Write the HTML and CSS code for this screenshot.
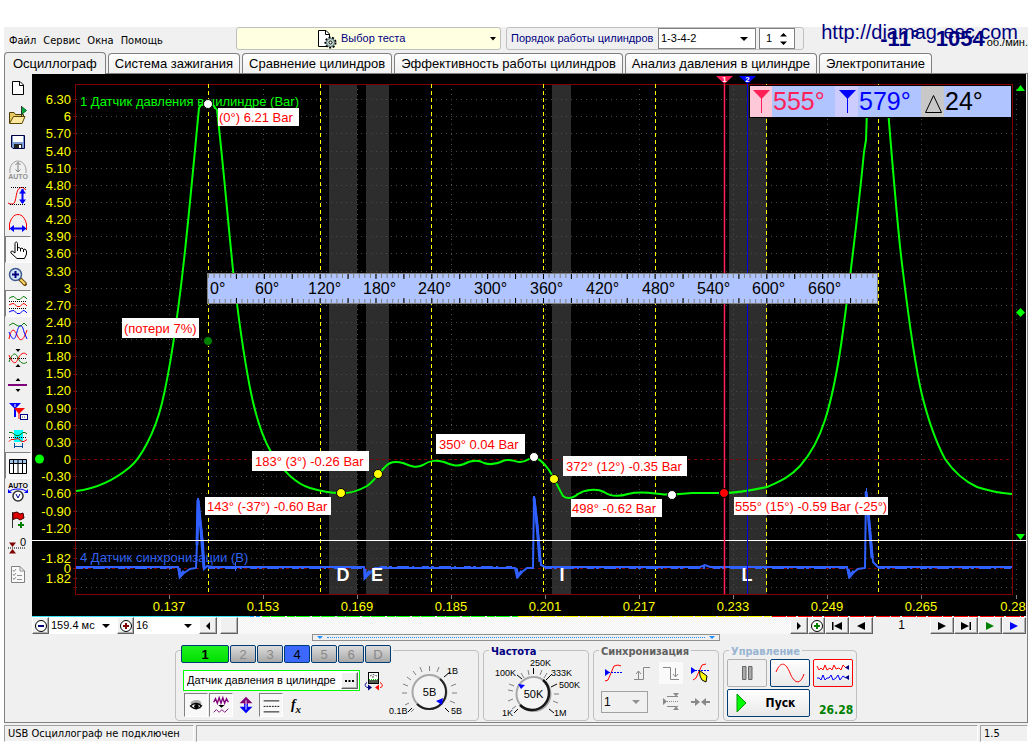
FILE: index.html
```html
<!DOCTYPE html>
<html lang="ru">
<head>
<meta charset="utf-8">
<meta name="viewport" content="width=device-width, initial-scale=1">
<title>Осциллограф</title>
<link rel="stylesheet" href="styles.css">
</head>
<body>
<div class="app">
  <header class="topbar">
    <nav class="menu">
      <button type="button">Файл</button>
      <button type="button">Сервис</button>
      <button type="button">Окна</button>
      <button type="button">Помощь</button>
    </nav>
    <button type="button" class="test-picker">
      <svg class="test-icon" width="20" height="20" viewBox="0 0 20 20">
        <path d="M1.500 1.500H9L12.500 5V17.500H1.500Z" fill="#fff" stroke="#000"/>
        <path d="M8.500 1.500V5.500H12.500" fill="none" stroke="#000"/>
        <circle cx="13.500" cy="13.500" r="5" fill="#c4dccb" stroke="#000" stroke-width="2" stroke-dasharray="2 1.500"/>
        <circle cx="13.500" cy="13.500" r="4" fill="#c4dccb" stroke="#567"/>
        <circle cx="13.500" cy="13.500" r="1.500" fill="#fff" stroke="#000"/>
      </svg>
      <span>Выбор теста</span>
      <svg class="test-arrow" width="6" height="4" viewBox="0 0 6 4"><path d="M0 0H6L3 3.500Z"/></svg>
    </button>
    <div class="firing">
      <label for="order">Порядок работы цилиндров</label>
      <span class="combo combo-order"><select id="order"><option>1-3-4-2</option></select></span>
      <span class="spin">
        <input id="cyl" type="text" value="1" aria-label="Цилиндр">
        <svg width="9" height="14" viewBox="0 0 9 14"><path d="M1 4.500H8L4.500 1ZM1 9.500H8L4.500 13Z"/></svg>
      </span>
    </div>
    <div class="rpm"><b class="angle">-11°</b><b>1054</b><span>об./мин.</span></div>
    <a class="site" href="#">http://diamag-esc.com</a>
  </header>

  <nav class="tabs">
    <button type="button" class="tab tab-on">Осциллограф</button>
    <button type="button" class="tab">Система зажигания</button>
    <button type="button" class="tab">Сравнение цилиндров</button>
    <button type="button" class="tab">Эффективность работы цилиндров</button>
    <button type="button" class="tab">Анализ давления в цилиндре</button>
    <button type="button" class="tab">Электропитание</button>
  </nav>

  <main class="work">
    <div class="scope">
      <aside class="tools">
        <button type="button" aria-label="Новый"><svg viewBox="0 0 26 26"><path d="M7.500 6.500H15L18.500 10V19.500H7.500Z" fill="#fff" stroke="#000"/><path d="M14.500 6.500V10.500H18.500" fill="none" stroke="#000"/></svg></button>
        <button type="button" aria-label="Открыть"><svg viewBox="0 0 26 26"><path d="M4.500 21V10.500H9L10.500 12.500H18.500V14" fill="#e8c860" stroke="#4c3c00"/><path d="M4.500 21.500L8.500 14.500H20L17 21.500Z" fill="#ffe9a0" stroke="#5a4600"/><path d="M16.500 4.500L21.500 8.500L16.500 12.500Z" fill="#0a3" stroke="#063"/><path d="M16.500 4V15" stroke="#333"/></svg></button>
        <button type="button" aria-label="Сохранить"><svg viewBox="0 0 26 26"><path d="M6.500 6.500H19.500V19.500H8L6.500 18Z" fill="#7c9cd8" stroke="#000040"/><path d="M8 7H18V13H8Z" fill="#fff"/><path d="M9 15H17V19H9Z" fill="#222"/><path d="M14 16H16V19H14Z" fill="#fff"/></svg></button>
        <button type="button" aria-label="Авто" disabled><svg viewBox="0 0 26 26"><path d="M5 17C4 9 9 5 13 5S22 9 21 17" fill="none" stroke="#a0a0a0"/><path d="M13 6V16M10.500 9L13 6.500L15.500 9M10.500 13.500L13 16L15.500 13.500" fill="none" stroke="#808080"/><text x="13" y="23" class="icon-text" fill="#909090">AUTO</text></svg></button>
        <button type="button" aria-label="Размах"><svg viewBox="0 0 26 26"><path d="M3 20L5 21H8C12 20 10 5 16 4.500H18L21 7" fill="none" stroke="#f00"/><path d="M6 4.500H22M5 21.500H20" stroke="#000" stroke-dasharray="1 1"/><path d="M17.500 6V20" stroke="#00f" stroke-width="2"/><path d="M14 10.500L17.500 6L21 10.500ZM14 16.500L17.500 21L21 16.500Z" fill="#00f"/></svg></button>
        <button type="button" aria-label="Период"><svg viewBox="0 0 26 26"><path d="M4.500 20V14C6 8 9 4.500 13 4.500S20 8 21.500 14V20" fill="none" stroke="#f00"/><path d="M6 18.500H20" stroke="#00f" stroke-width="2"/><path d="M9 15L4.500 18.500L9 22ZM17 15L21.500 18.500L17 22Z" fill="#00f"/></svg></button>
        <button type="button" class="on" aria-label="Рука"><svg viewBox="0 0 26 26"><path d="M10 16V6.500C10 4.500 12.500 4.500 12.500 6.500V11L14 10.500L15.500 11.500L17 11L18.500 12.500L20 12L21.500 14V17L19.500 21.500H12L6 16C5 14.500 7 13.500 8 14.500Z" fill="#fff" stroke="#000"/><path d="M12.500 11V14M15.500 11.500V14.500M18.500 12.500V15" stroke="#000"/></svg></button>
        <button type="button" aria-label="Масштаб"><svg viewBox="0 0 26 26"><path d="M15 15L20 20" stroke="#6b4b10" stroke-width="4" stroke-linecap="round"/><path d="M15.500 15.500L20 20" stroke="#ffd968" stroke-width="2"/><circle cx="10.500" cy="10.500" r="6" fill="#cfe4fa" stroke="#3c588c" stroke-width="1.500"/><path d="M7 10.500H14M10.500 7V14" stroke="#00007c" stroke-width="2"/></svg></button>
        <button type="button" class="on" aria-label="Раздельно"><svg viewBox="0 0 26 26"><g fill="none"><path d="M4 7.500L6 6L9 5.500L12 8.500H15L18 5.500L20 6L22 8" stroke="#0a7a0a"/><path d="M4 14L6 13L9 12.500L12 15.500H15L18 12.500L20 13L22 15" stroke="#f00"/><path d="M4 21L6 20L9 19.500L12 22.500H15L18 19.500L20 20L22 22" stroke="#00f"/><path d="M4 10.500H22M4 17.500H22" stroke="#000" stroke-dasharray="1 1"/></g></svg></button>
        <button type="button" aria-label="Вместе"><svg viewBox="0 0 26 26"><g fill="none"><path d="M4 7.500L8 5L13 8H16L19 5L22 8" stroke="#0a7a0a"/><path d="M4 21C6 10 9 10 12 17S18 24 22 12" stroke="#f00"/><path d="M4 14C8 24 10 22 12 14S17 5 19 14L22 21" stroke="#00f"/></g></svg></button>
        <button type="button" aria-label="Наложение"><svg viewBox="0 0 26 26"><path d="M4 13.500H22" stroke="#000" stroke-dasharray="1 1"/><path d="M4 17C8 6 11 8 13 13S19 20 22 17" fill="none" stroke="#0a7a0a"/><path d="M4 10C8 20 11 19 13 14S19 6 22 10" fill="none" stroke="#f00"/><path d="M10.500 4H15.500L13 7ZM10.500 22H15.500L13 19Z"/></svg></button>
        <button type="button" aria-label="Сдвиг"><svg viewBox="0 0 26 26"><path d="M3 13H22" stroke="#80007c" stroke-width="2"/><path d="M10.500 9H15.500L13 6ZM10.500 17H15.500L13 20Z"/></svg></button>
        <button type="button" aria-label="Маркеры"><svg viewBox="0 0 26 26"><path d="M4 4H16L10 10Z M9 6H11V18H9Z" fill="#00f"/><path d="M9 9H20L14 15Z" fill="#f00"/><path d="M14 13V20" stroke="#f00"/><path d="M10 5V8" stroke="#fff"/><rect x="15.500" y="15.500" width="7" height="5" fill="#fff" stroke="#000080"/><path d="M17 18H21" stroke="#555" stroke-dasharray="1 1"/></svg></button>
        <button type="button" aria-label="Область"><svg viewBox="0 0 26 26"><path d="M9 4H18V16H9Z" fill="#0ff"/><path d="M4 6.500H7L11 9.500H14L18 6.500H20L22 8" fill="none" stroke="#0a7a0a"/><path d="M4 15.500L6 13.500H9L13 12.500L17 15.500H19L22 13.500" fill="none" stroke="#f00"/><path d="M4 11.500H22" stroke="#000" stroke-dasharray="1 1"/><path d="M9.500 17V22M17.500 17V22M10 20.500H17" stroke="#004c9c"/></svg></button>
        <button type="button" class="on" aria-label="Таблица"><svg viewBox="0 0 26 26"><path d="M4.500 6.500H21.500V20.500H4.500Z" fill="#fff" stroke="#000"/><path d="M5 7H21V10H5Z" fill="#9cc4ec"/><path d="M4 10.500H22M8.500 7V20M13 7V20M17.500 7V20" stroke="#000"/></svg></button>
        <button type="button" aria-label="Авто развертка"><svg viewBox="0 0 26 26"><text x="13" y="8" class="icon-text" fill="#000">AUTO</text><path d="M4 12C7 8 19 8 22 12" fill="none" stroke="#00f"/><path d="M3 9V13H7ZM23 9V13H19Z" fill="#00f"/><circle cx="13" cy="16" r="5" fill="#fff" stroke="#333" stroke-width="1.500"/><path d="M11 14L13 18L15 14" fill="none" stroke="#008"/></svg></button>
        <button type="button" aria-label="Флаг"><svg viewBox="0 0 26 26"><path d="M7.500 5V21" stroke="#333"/><path d="M8 6L12 5L15 7L18 6L19 11L15 13L12 11L8 12.500Z" fill="#e00000" stroke="#400"/><path d="M13 18H19M16 15V21" stroke="#008000" stroke-width="2"/></svg></button>
        <button type="button" aria-label="Ноль"><svg viewBox="0 0 26 26"><path d="M4 8.500H11L7.500 13ZM4 19.500H11L7.500 15Z" fill="#800000"/><path d="M3 14H21" stroke="#000" stroke-dasharray="1 1"/><text x="15" y="12" class="zero-text">0</text></svg></button>
        <button type="button" aria-label="Отчет"><svg viewBox="0 0 26 26"><path d="M6.500 5.500H15L19.500 10V21.500H6.500Z" fill="#fafafa" stroke="#808080"/><path d="M15 5.500V10H19.500M8 9L9 10.500L11 8M8 13L9 14.500L11 12M8 17L9 18.500L11 16M12 14.500H17M12 18.500H17" fill="none" stroke="#909090"/></svg></button>
      </aside>

      <div class="view">
        <svg class="chart" viewBox="32 74 994 543" role="img" aria-label="Осциллограмма давления в цилиндре">
          <rect x="32" y="74" width="994" height="542" fill="#000"/>
          <path fill="#2d2d2d" d="M329 85H357V594H329ZM366 85H389V594H366ZM552 85H571V594H552ZM729 85H767V594H729Z"/>
          <path class="grid" d="M76 99.500H1012M76 116.500H1012M76 133.500H1012M76 151.500H1012M76 168.500H1012M76 185.500H1012M76 202.500H1012M76 219.500H1012M76 236.500H1012M76 253.500H1012M76 271.500H1012M76 288.500H1012M76 305.500H1012M76 322.500H1012M76 339.500H1012M76 356.500H1012M76 374.500H1012M76 391.500H1012M76 408.500H1012M76 425.500H1012M76 442.500H1012M76 476.500H1012M76 493.500H1012M76 511.500H1012M76 528.500H1012M76 548.500H1012M76 558.500H1012M76 578.500H1012M76 587.500H1012"/>
          <path class="grid" d="M169.500 89V594M263.500 89V594M357.500 89V594M451.500 89V594M545.500 89V594M639.500 89V594M733.500 89V594M827.500 89V594M921.500 89V594M1016.500 89V594"/>
          <path d="M169.500 595V599M263.500 595V599M357.500 595V599M451.500 595V599M545.500 595V599M639.500 595V599M733.500 595V599M827.500 595V599M921.500 595V599M1016.500 595V599" stroke="#808080"/>
          <path d="M75 99.500H73M75 116.500H73M75 133.500H73M75 151.500H73M75 168.500H73M75 185.500H73M75 202.500H73M75 219.500H73M75 236.500H73M75 253.500H73M75 271.500H73M75 288.500H73M75 305.500H73M75 322.500H73M75 339.500H73M75 356.500H73M75 374.500H73M75 391.500H73M75 408.500H73M75 425.500H73M75 442.500H73M75 459.500H73M75 476.500H73M75 493.500H73M75 511.500H73M75 528.500H73M75 548.500H73M75 558.500H73M75 568.500H73M75 578.500H73M75 587.500H73" stroke="#800000"/>
          <path d="M76 459.500H1012M76 568.500H1012" stroke="#800000" stroke-dasharray="3 3"/>
          <rect x="75.500" y="84.500" width="937" height="510" fill="none" stroke="#800000"/>
          <path d="M208.500 84V594M320.500 84V594M431.500 84V594M543.500 84V594M655.500 84V594M766.500 84V594M878.500 84V594" stroke="#ff0" stroke-dasharray="4 3"/>

          <g class="axis axis-y">
            <text x="71" y="104">6.30</text><text x="71" y="121">6</text><text x="71" y="138">5.70</text><text x="71" y="156">5.40</text><text x="71" y="173">5.10</text><text x="71" y="190">4.80</text><text x="71" y="207">4.50</text><text x="71" y="224">4.20</text><text x="71" y="241">3.90</text><text x="71" y="258">3.60</text><text x="71" y="276">3.30</text><text x="71" y="293">3</text><text x="71" y="310">2.70</text><text x="71" y="327">2.40</text><text x="71" y="344">2.10</text><text x="71" y="361">1.80</text><text x="71" y="378">1.50</text><text x="71" y="395">1.20</text><text x="71" y="413">0.90</text><text x="71" y="430">0.60</text><text x="71" y="447">0.30</text><text x="71" y="464">0</text><text x="71" y="481">-0.30</text><text x="71" y="498">-0.60</text><text x="71" y="516">-0.90</text><text x="71" y="533">-1.20</text><text x="71" y="563">-1.82</text><text x="71" y="573">0</text><text x="71" y="583">1.82</text>
          </g>
          <g class="axis axis-x">
            <text x="169" y="611">0.137</text><text x="263" y="611">0.153</text><text x="357" y="611">0.169</text><text x="451" y="611">0.185</text><text x="545" y="611">0.201</text><text x="639" y="611">0.217</text><text x="733" y="611">0.233</text><text x="827" y="611">0.249</text><text x="921" y="611">0.265</text><text x="1013" y="611">0.28</text>
          </g>
          <text x="80" y="106" class="trace" fill="#0f0">1 Датчик давления в цилиндре (Bar)</text>
          <text x="80" y="562" class="trace" fill="#2f62f0">4 Датчик синхронизации (В)</text>

          <path fill="none" stroke="#0f0" stroke-width="2" stroke-linejoin="round" d="M76 491C94 489 112 482 130 467C141 458 155 432 162 403C168 378 177 323 184 260C189 215 194 160 199 108L201 105L208 103L213 105L217 110C222 152 228 221 233 270C238 315 245 362 250 388C256 419 264 440 271 452C284 473 297 484 310 488C320 491 330 493 340 493C350 494 358 491 367 486C374 481 379 473 385 467C389 462 396 461 403 463C408 465 415 469 423 465C430 460 436 460 444 462C451 465 457 467 464 464C470 461 477 459 484 463C490 465 497 464 503 461C508 458 513 461 519 462C525 463 529 458 534 457C540 459 544 463 549 470C555 480 558 487 563 496C567 499 572 499 578 494C584 490 596 488 604 492C611 497 618 497 628 494C640 491 650 493 660 494C672 496 684 493 693 493L724 493C738 493 753 490 767 487C778 482 789 478 800 466C808 457 817 445 825 420C831 401 837 376 843 331C850 278 858 215 864 152L866 140L867 110M888 110C892 157 897 223 902 264C909 322 915 366 922 395C930 427 937 444 945 459C956 475 966 482 977 487C989 491 1000 493 1012 494"/>

          <path d="M76 567H178L180 577L184 573L190 569L196 568L197 543L198 498L200 520L203 543L204 569L207 566L214 567H364L365 578L368 575L375 568H515L517 577L522 572L527 568H533L534 496L537 523L539 543L541 565L545 567H700L705 565L710 567H847L849 577L853 573L858 569L865 568L866 491L869 520L872 550L873 562L878 567H1012" fill="none" stroke="#3060ff" stroke-width="2"/>
          <path d="M197 545L198 500L201 530L204 568M534 498L537 525L540 562M866 492L869 522L872 558M179 568L180 576L184 571M365 569V577L370 571M516 568L518 576L522 571M848 569L850 576L854 571" fill="none" stroke="#3060ff" stroke-width="3"/>
          <path d="M76 567.500H176M208 567.500H362M380 567.500H512M545 567.500H845M878 567.500H1012" stroke="#3060ff" stroke-width="3" stroke-dasharray="7 2 3 5 12 3 2 8"/>
          <path d="M235.500 562V571M866.500 488V493" stroke="#3060ff"/>

          <g class="phase"><text x="343" y="581">D</text><text x="377" y="581">E</text><text x="562" y="581">I</text><text x="747" y="581">L</text></g>
          <path d="M32 540.500H1026" stroke="#fff"/>
          <path d="M724.500 84V594" stroke="#ff2058" stroke-width="1.500"/>
          <path d="M747.500 84V594" stroke="#0000e0"/>
          <path d="M716 76H733L724.500 84Z" fill="#ff2058"/><path d="M739 76H756L747.500 84Z" fill="#00f"/>
          <text x="724.500" y="82" class="flag">1</text><text x="747.500" y="82" class="flag">2</text>

          <g class="ruler">
            <rect x="207.500" y="273.500" width="670" height="30" fill="#b0c4ff" stroke="#808080"/>
            <path d="M208 276H877M208 301H877" stroke="#808080" stroke-width="4" stroke-dasharray="1 4.583"/>
            <path d="M235.900 276.500H877M235.900 300.500H877" stroke="#000" stroke-width="5" stroke-dasharray="1 26.917"/>
            <text x="210" y="294">0°</text><text x="255" y="294">60°</text><text x="308" y="294">120°</text><text x="363" y="294">180°</text><text x="418" y="294">240°</text><text x="474" y="294">300°</text><text x="530" y="294">360°</text><text x="586" y="294">420°</text><text x="642" y="294">480°</text><text x="697" y="294">540°</text><text x="752" y="294">600°</text><text x="808" y="294">660°</text>
          </g>

          <g class="note">
            <rect x="218" y="108" width="81" height="18"/><text x="219" y="122">(0°) 6.21 Bar</text>
            <rect x="122" y="318" width="77" height="20"/><text x="124" y="333">(потери 7%)</text>
            <rect x="252" y="451" width="117" height="20"/><text x="255" y="466">183° (3°) -0.26 Bar</text>
            <rect x="205" y="497" width="126" height="18"/><text x="207" y="511">143° (-37°) -0.60 Bar</text>
            <rect x="436" y="434" width="89" height="20"/><text x="439" y="449">350° 0.04 Bar</text>
            <rect x="563" y="456" width="124" height="20"/><text x="566" y="471">372° (12°) -0.35 Bar</text>
            <rect x="571" y="499" width="91" height="18"/><text x="572" y="513">498° -0.62 Bar</text>
            <rect x="734" y="497" width="154" height="18"/><text x="735" y="511">555° (15°) -0.59 Bar (-25°)</text>
          </g>
          <g stroke="#000">
            <circle cx="208" cy="104" r="4.500" fill="#fff"/><circle cx="208" cy="341" r="4.500" fill="#008000"/>
            <circle cx="341" cy="493" r="4.500" fill="#ff0"/><circle cx="378" cy="474" r="4.500" fill="#ff0"/>
            <circle cx="534" cy="457" r="4.500" fill="#fff"/><circle cx="554" cy="479" r="4.500" fill="#ff0"/>
            <circle cx="672" cy="495" r="4.500" fill="#fff"/><circle cx="724" cy="493" r="4.500" fill="#f00"/>
          </g>
          <g fill="#0f0"><circle cx="39.500" cy="459" r="4.500"/><path d="M1016 91H1025L1020.500 85ZM1020.500 308L1025 312.500L1020.500 317L1016 312.500ZM1016 534H1025L1020.500 540Z"/></g>

          <rect x="749.500" y="85.500" width="262" height="32" fill="#b0c4ff" stroke="#000"/>
          <path d="M750 86H772V117H750Z" fill="#ffc8d8"/><path d="M835 86H858V117H835Z" fill="#ccccff"/><path d="M921 86H944V117H921Z" fill="#c8c8c8"/>
          <path d="M753 90H770L761.500 99Z" fill="#ff2058"/><path d="M761.500 98V113" stroke="#ff2058"/>
          <path d="M839 90H856L847.500 99Z" fill="#00f"/><path d="M847.500 98V113" stroke="#00f"/>
          <path d="M925.500 112.500H941.500L933.500 95.500Z" fill="none" stroke="#000"/>
          <g class="readout"><text x="773" y="110" fill="#ff2058">555°</text><text x="859" y="110" fill="#00f">579°</text><text x="945" y="110">24°</text></g>

          <path d="M32 616.500H250" stroke="#40e0f0"/><path d="M250 616.500H262" stroke="#00a0ff" stroke-dasharray="4 2"/>
          <path d="M262 616.500H518" stroke="#0f0" stroke-dasharray="8 1 14 2"/><path d="M518 616.500H772" stroke="#ff0" stroke-dasharray="14 2 6 1"/><path d="M772 616.500H1024" stroke="#f00" stroke-dasharray="14 1 9 2"/>
        </svg>

        <div class="timebar">
          <button type="button" class="raised zoom" aria-label="Уменьшить"><svg width="14" height="14" viewBox="0 0 14 14"><circle cx="7" cy="7" r="5.500" fill="#fff" stroke="#000"/><path d="M4 7H10" stroke="#00007c" stroke-width="2"/></svg></button>
          <span class="combo combo-time"><select aria-label="Развертка"><option>159.4 мс</option></select></span>
          <button type="button" class="raised zoom" aria-label="Увеличить"><svg width="14" height="14" viewBox="0 0 14 14"><circle cx="7" cy="7" r="5.500" fill="#fff" stroke="#000"/><path d="M4 7H10M7 4V10" stroke="#800000" stroke-width="2"/></svg></button>
          <span class="combo combo-zoom"><select aria-label="Масштаб"><option>16</option></select></span>
          <button type="button" class="raised step" aria-label="Влево"><svg width="8" height="8" viewBox="0 0 8 8"><path d="M6 0V8L2 4Z"/></svg></button>
          <div class="track"><span class="raised thumb"></span></div>
          <button type="button" class="raised step" aria-label="Вправо"><svg width="8" height="8" viewBox="0 0 8 8"><path d="M2 0V8L6 4Z"/></svg></button>
          <button type="button" class="raised zoom" aria-label="Приблизить"><svg width="14" height="14" viewBox="0 0 14 14"><circle cx="7" cy="7" r="5.500" fill="#fff" stroke="#000"/><path d="M4 7H10M7 4V10" stroke="#008000" stroke-width="2"/></svg></button>
          <button type="button" class="raised nav" aria-label="В начало"><svg width="12" height="8" viewBox="0 0 12 8"><path d="M1 0H2.500V8H1ZM11 0V8L3 4Z"/></svg></button>
          <button type="button" class="raised nav" aria-label="Назад"><svg width="12" height="8" viewBox="0 0 12 8"><path d="M10 0V8L2 4Z"/></svg></button>
          <output class="page">1</output>
          <button type="button" class="raised nav" aria-label="Вперед"><svg width="12" height="8" viewBox="0 0 12 8"><path d="M2 0V8L10 4Z"/></svg></button>
          <button type="button" class="raised nav" aria-label="В конец"><svg width="12" height="8" viewBox="0 0 12 8"><path d="M1 0V8L9 4ZM9.500 0H11V8H9.500Z"/></svg></button>
          <button type="button" class="raised nav" aria-label="Воспроизвести"><svg width="12" height="8" viewBox="0 0 12 8"><path d="M2 0V8L10 4Z" fill="#008000"/></svg></button>
          <button type="button" class="raised nav" aria-label="Повтор"><svg width="12" height="8" viewBox="0 0 12 8"><path d="M2 0V8L10 4Z" fill="#00f"/></svg></button>
        </div>
      </div>
    </div>

    <div class="splitter"><i></i><span></span><i></i></div>

    <div class="panels">
      <section class="panel channel">
        <div class="channel-left">
          <div class="channels">
            <button type="button" class="ch ch-one">1</button><button type="button" class="ch">2</button><button type="button" class="ch">3</button><button type="button" class="ch ch-four">4</button><button type="button" class="ch">5</button><button type="button" class="ch">6</button><button type="button" class="ch">D</button>
          </div>
          <div class="sensor-row">
            <span class="sensor"><input type="text" value="Датчик давления в цилиндре" aria-label="Датчик"><button type="button" class="raised more" aria-label="Выбрать"><svg width="9" height="2" viewBox="0 0 9 2"><path d="M0 0H2V2H0ZM3.500 0H5.500V2H3.500ZM7 0H9V2H7Z"/></svg></button></span>
            <button type="button" class="flat" aria-label="Переключить"><svg width="20" height="20" viewBox="0 0 20 20"><rect x="4.500" y="1.500" width="10" height="11" fill="#fff" stroke="#000"/><path d="M5 9H14V12H5Z" fill="#505850"/><path d="M6 5L9 3.500L13 5M9 5V7" fill="none" stroke="#555" stroke-dasharray="2 1"/><path d="M5 8.500H14" stroke="#0c0" stroke-dasharray="1 1"/><path d="M3 11.500C0 13 1 16.500 4 16.500" fill="none" stroke="#000080"/><path d="M4 13.500V19.500L8 16.500Z" fill="#000080"/><path d="M16 11.500C19 13 19 16.500 16 16.500" fill="none" stroke="#f00"/><path d="M15 13.500V19.500L11 16.500Z" fill="#f00"/></svg></button>
          </div>
          <div class="chtools">
            <button type="button" class="on" aria-label="Показать"><svg width="24" height="22" viewBox="0 0 24 22"><path d="M6 8C11 4 17 5 18 9L17 15H11C8 15 6 13 7 11Z" fill="#aaa"/><path d="M6 12C10 8 15 9 18 12C15 16 10 16 7 13Z" fill="#fff" stroke="#000" stroke-width="1.500"/><circle cx="12.500" cy="12.500" r="2.500"/></svg></button>
            <button type="button" class="on" aria-label="Фильтр"><svg width="24" height="22" viewBox="0 0 24 22"><path d="M4 8L6 4L8 9L10 3L12 9L14 3L16 9L18 4L20 8" fill="none" stroke="#80007c" stroke-width="1.500"/><path d="M9 11H16L12.500 14Z"/><path d="M4 19L7 16L10 19L13 16L16 19L20 15" fill="none" stroke="#80007c"/></svg></button>
            <button type="button" aria-label="Инверсия"><svg width="24" height="22" viewBox="0 0 24 22"><path d="M12 2L19 9H14V11H10V9H5Z" fill="#80007c"/><path d="M12 20L19 13H14V10H10V13H5Z" fill="#00f"/><path d="M12 6V16" stroke="#fff"/></svg></button>
            <button type="button" class="on" aria-label="Линии"><svg width="24" height="22" viewBox="0 0 24 22"><path d="M4 6.500H21M4 18.500H21" stroke="#000"/><path d="M4 12.500H21" stroke="#000" stroke-dasharray="2 1"/></svg></button>
            <button type="button" class="fx" aria-label="Функция">f<sub>x</sub></button>
          </div>
        </div>
        <svg class="knob" width="84" height="66" viewBox="387 655 84 66">
          <g stroke="#808080"><path d="M414 711L411 714M409 705L405 707M407 695H402M408 688L403 686M411 682L407 679M416 677L413 673M422 674L420 669M429.500 673V668M437 674L439 669M451 688L456 686M452 695H457M450 703L455 705"/></g>
          <path d="M444 679L450 674M445 710L449 714M412 710L408 714" stroke="#000"/>
          <circle cx="429.500" cy="694" r="17" fill="#f4f4f4" stroke="#a8a8a8" stroke-width="2"/>
          <path d="M440 681A17 17 0 1 1 417 706" fill="none" stroke="#202020" stroke-width="2"/>
          <path d="M443 700L442 707L436 703Z" fill="#00f"/>
          <text x="429.500" y="698" class="knob-value">5В</text>
          <g class="knob-label"><text x="447" y="676">1В</text><text x="389" y="716">0.1В</text><text x="451" y="716">5В</text></g>
        </svg>
      </section>

      <section class="panel freq">
        <h2>Частота</h2>
        <svg class="knob" width="90" height="64" viewBox="491 657 90 64">
          <path d="M516 706L512 709M513 699L508 701M513 691L508 690M514 686L509 684M524 678L521 673M529 675L528 670M540 675L542 670M544 678L547 673M554 694H559M553 701L558 703" stroke="#808080"/>
          <path d="M522 679L517 675M533.500 674V668M546 680L552 674M551 687L557 684M549 709L554 713M518 709L514 713" stroke="#000"/>
          <circle cx="533.500" cy="694" r="17" fill="#f4f4f4" stroke="#a8a8a8" stroke-width="2"/>
          <path d="M543 680A17 17 0 1 1 520 705" fill="none" stroke="#181818" stroke-width="2.500"/>
          <path d="M518 684L525 685L521 689Z" fill="#00f"/>
          <text x="533.500" y="698" class="knob-value">50K</text>
          <g class="knob-label"><text x="530" y="666">250K</text><text x="495" y="676">100K</text><text x="551" y="676">333K</text><text x="559" y="688">500K</text><text x="502" y="716">1K</text><text x="554" y="716">1M</text></g>
        </svg>
      </section>

      <section class="panel sync">
        <h2>Синхронизация</h2>
        <div class="sync-grid">
          <button type="button" class="flat" aria-label="Уровень"><svg width="20" height="20" viewBox="0 0 20 20"><path d="M2 18L5 17L11 3L15 2L18 3" fill="none" stroke="#f00"/><path d="M2 9.500H20" stroke="#00f" stroke-dasharray="2 1"/><path d="M2 6L7 9.500L2 13Z" fill="#00f"/></svg></button>
          <button type="button" class="flat" aria-label="Фронт" disabled><svg width="20" height="20" viewBox="0 0 20 20"><path d="M2 16.500H11.500V4.500H18M6.500 16V8M4 11L6.500 8L9 11" fill="none" stroke="#888"/></svg></button>
          <button type="button" class="flat hatched" aria-label="Спад" disabled><svg width="20" height="20" viewBox="0 0 20 20"><path d="M2 4.500H9.500V16.500H18M14.500 5V13M12 11L14.500 14L17 11" fill="none" stroke="#888"/></svg></button>
          <button type="button" class="flat" aria-label="Указать"><svg width="20" height="20" viewBox="0 0 20 20"><path d="M3 17L6 15L12 2L16 1" fill="none" stroke="#f00"/><path d="M2 7.500H19" stroke="#00f" stroke-dasharray="2 1"/><path d="M1 4L6 7.500L1 11Z" fill="#00f"/><path d="M9.500 7.500L17 13L16 19L12 17L10 13Z" fill="#ff0" stroke="#000"/></svg></button>
          <span class="combo combo-sync"><select aria-label="Канал синхронизации"><option>1</option></select></span>
          <button type="button" class="flat" aria-label="Окно" disabled><svg width="20" height="20" viewBox="0 0 20 20"><path d="M2 6V13L6 9.500ZM12 1H18L15 4.500ZM12 18H18L15 14.500Z" fill="#888"/><path d="M6 4.500H17M6 14.500H17" stroke="#888"/><path d="M6 9.500H18" stroke="#888" stroke-dasharray="1 1"/></svg></button>
          <button type="button" class="flat" aria-label="Сжать" disabled><svg width="20" height="20" viewBox="0 0 20 20"><path d="M1 9H5V6L10 10L5 14V11H1ZM20 9H16V6L11 10L16 14V11H20Z" fill="#888"/></svg></button>
        </div>
      </section>

      <section class="panel control">
        <h2>Управление</h2>
        <div class="control-grid">
          <button type="button" class="big pause" aria-label="Пауза" disabled><svg width="14" height="18" viewBox="0 0 14 18"><path d="M2.500 2.500H6V15.500H2.500ZM8.500 2.500H12V15.500H8.500Z" fill="#aaa" stroke="#666"/></svg></button>
          <button type="button" class="big" aria-label="Одиночный"><svg width="32" height="24" viewBox="0 0 32 24"><path d="M2 11C7 -1 12 2 16 12S26 25 30 13" fill="none" stroke="#f00"/></svg></button>
          <button type="button" class="big multi" aria-label="Непрерывный"><svg width="34" height="22" viewBox="0 0 34 22"><path d="M1 4L3 8L5 6L7 8L9 3L11 8L14 6L16 8L18 3L20 7L23 6L25 8L27 3L30 6" fill="none" stroke="#f00"/><path d="M1 16H3L5 18L7 13L9 18L11 16H13L15 13L17 18L20 16L22 13L24 18L27 14L30 16" fill="none" stroke="#00f"/><path d="M33 3V8L29 5.500ZM33 13V18L29 15.500Z" fill="#000080"/></svg></button>
          <button type="button" class="big start"><svg width="12" height="20" viewBox="0 0 12 20"><path d="M1 1L10 10L1 19Z" fill="#0f0" stroke="#090"/></svg><span>Пуск</span></button>
          <output class="version">26.28</output>
        </div>
      </section>
    </div>
  </main>

  <footer class="status"><span>USB Осциллограф не подключен</span><span></span><span>1.5</span></footer>
</div>
</body>
</html>
```

FILE: styles.css
```css
* { box-sizing: border-box; }

body {
  margin: 0;
  background: #fff;
  color: #000;
  font: 11px/13px "Liberation Sans", Arial, sans-serif;
}

button, input, select {
  margin: 0;
  padding: 0;
  border: 0;
  border-radius: 0;
  background: none;
  color: inherit;
  font: inherit;
}

svg { display: block; }

.app {
  margin: 27px 4px 4px;
  background: #f0f0f0;
}

/* top bar */
.topbar {
  position: relative;
  display: flex;
  height: 24px;
}

.menu {
  display: flex;
  align-items: center;
  gap: 7px;
  width: 232px;
  padding: 2px 0 0 5px;
  font-family: "DejaVu Sans Condensed", "DejaVu Sans", sans-serif;
}

.test-picker {
  display: flex;
  align-items: center;
  justify-content: space-between;
  width: 265px;
  height: 23px;
  padding: 0 4px 0 80px;
  border: 1px solid #c0c0c0;
  border-radius: 3px;
  background: #ffffe1;
  color: #000080;
}

.test-picker span { flex: 1; padding-left: 4px; text-align: left; }
.test-arrow { fill: #000; }

.firing {
  display: flex;
  align-items: center;
  gap: 3px;
  width: 298px;
  height: 23px;
  margin-left: 5px;
  padding-left: 4px;
  border: 1px solid #c0c0c0;
  border-radius: 3px;
  color: #000080;
}

.firing label { flex: 1; white-space: nowrap; }
.firing .spin { margin-right: 8px; }

.combo {
  position: relative;
  display: block;
  background: #fff;
  color: #000;
}

.combo select {
  width: 100%;
  height: 100%;
  padding-left: 2px;
  appearance: none;
}

.combo::after {
  content: "";
  position: absolute;
  top: 50%;
  right: 7px;
  margin-top: -2px;
  border: 4px solid transparent;
  border-top-color: #000;
  border-bottom: 0;
  pointer-events: none;
}

.combo-order { width: 98px; height: 21px; border: 1px solid #808080; }

.spin {
  display: flex;
  align-items: center;
  width: 36px;
  height: 21px;
  border: 1px solid #808080;
  background: #fff;
  color: #000;
}

.spin input { width: 19px; padding-left: 6px; }

.rpm {
  display: flex;
  align-items: baseline;
  margin-left: auto;
  white-space: nowrap;
}

.rpm b { color: #000080; font-size: 22px; line-height: 24px; }
.rpm .angle { margin-right: 16px; }
.rpm span { margin-left: 2px; }

.site {
  position: absolute;
  top: -6px;
  right: 10px;
  color: #000080;
  font-size: 20px;
  line-height: 23px;
  text-decoration: none;
}

/* tabs */
.tabs {
  display: flex;
  align-items: flex-end;
  gap: 2px;
  height: 23px;
  border-bottom: 1px solid #808080;
}

.tab {
  height: 20px;
  padding: 0 6px;
  border: 1px solid #808080;
  border-bottom: 0;
  border-radius: 4px 4px 0 0;
  background: linear-gradient(#fff, #f0f0f0);
  font-size: 13px;
  line-height: 19px;
  white-space: nowrap;
}

.tab-on {
  height: 22px;
  margin-bottom: -1px;
  padding: 0 8px;
  background: #f0f0f0;
}

/* scope */
.work {
  padding-right: 1px;
  border: 1px solid #808080;
  border-top: 0;
}

.scope { display: grid; grid-template-columns: 27px 1fr; }

.tools { display: flex; flex-direction: column; padding-right: 1px; }

.tools button {
  display: flex;
  align-items: center;
  justify-content: center;
  height: 27px;
  border: 1px solid transparent;
}

.tools svg { flex: none; width: 26px; height: 26px; }

.tools .on, .chtools .on {
  border: 1px solid #808080;
  border-right-color: #fff;
  border-bottom-color: #fff;
  background: #f8f8f8;
}

.icon-text { font: bold 7px "Liberation Sans", sans-serif; text-anchor: middle; }
.zero-text { font-size: 11px; }

.chart {
  width: 100%;
  height: auto;
  font-family: "Liberation Sans", Arial, sans-serif;
}

.grid { stroke: #4c4c4c; stroke-dasharray: 1 4; }
.axis, .trace, .note { font-size: 13px; }
.axis { fill: #ff0; }
.axis-y { text-anchor: end; }
.axis-x { text-anchor: middle; }
.note rect { fill: #fff; }
.note text { fill: #f00; }
.phase { fill: #fff; font-size: 18px; font-weight: bold; text-anchor: middle; }
.flag { fill: #fff; font-size: 8px; font-weight: bold; text-anchor: middle; }
.ruler text { font-size: 16px; }
.readout { font-size: 25px; }

.timebar { display: flex; height: 17px; }

.raised {
  display: flex;
  align-items: center;
  justify-content: center;
  border: 1px solid #fff;
  border-right-color: #606060;
  border-bottom-color: #606060;
  background: #f0f0f0;
  box-shadow: inset -1px -1px #b0b0b0;
}

.zoom { width: 17px; }
.step { width: 18px; }
.nav { width: 24px; }
.combo-time { width: 68px; }
.combo-zoom { width: 65px; }

.track {
  flex: 1;
  display: flex;
  padding-left: 3px;
  background: repeating-conic-gradient(#f0f0f0 0 25%, #fff 0 50%) 0 0 / 2px 2px;
}

.thumb { width: 18px; }
.page { width: 57px; font-size: 12px; line-height: 17px; text-align: center; }

.splitter {
  display: flex;
  align-items: center;
  gap: 4px;
  width: 408px;
  max-width: 100%;
  height: 7px;
  margin-left: 307px;
  padding: 0 4px;
  border: 1px solid #909090;
}

.splitter i {
  border: 3px solid transparent;
  border-top-color: #1e90ff;
  border-bottom: 0;
}

.splitter span { flex: 1; border-top: 1px dotted #1e90ff; }

/* control panels */
.panels {
  display: flex;
  gap: 4px;
  height: 81px;
  padding: 4px 0 1px 170px;
}

.panel { position: relative; }

.panel::before {
  content: "";
  position: absolute;
  inset: 5px 0 0;
  border: 1px solid #c0c0c0;
  border-radius: 4px;
  pointer-events: none;
}

.panel > * { position: relative; }

.panel h2 {
  width: max-content;
  margin: 0 0 0 6px;
  padding: 0 2px;
  background: #f0f0f0;
  font: bold 11px/13px "DejaVu Sans Condensed", "DejaVu Sans", sans-serif;
}

.channel { display: flex; width: 304px; padding-left: 6px; }
.channel-left { width: 212px; }

.channels { display: flex; gap: 1px; background: #f0f0f0; }

.ch {
  width: 26px;
  height: 18px;
  border: 1px solid #003c74;
  border-radius: 2px;
  background: linear-gradient(#dcdcdc, #a8a8a8);
  color: #888;
  font-size: 13px;
}

.ch-one { width: 48px; background: linear-gradient(#20f020, #00e000); color: #000; font-weight: bold; }
.ch-four { background: #3c68ff; color: #000; }

.sensor-row { display: flex; gap: 2px; padding: 7px 0 0 2px; }

.sensor {
  display: flex;
  width: 177px;
  height: 21px;
  padding: 1px;
  border: 1px solid #0f0;
  background: #fff;
}

.sensor input { flex: 1; min-width: 0; padding-left: 2px; }
.more { width: 17px; }

.flat { display: flex; align-items: center; justify-content: center; width: 24px; height: 22px; }
.hatched { background: #fafafa; }

.chtools { display: flex; gap: 1px; padding: 1px 0 0 3px; }
.chtools button { width: 24px; height: 24px; border: 1px solid transparent; }
.chtools button svg { width: 22px; }
.chtools .fx { font: italic bold 14px/20px "Liberation Serif", serif; }
.fx sub { font-size: 11px; line-height: 1px; }

.channel .knob { margin: 8px 0 0 -6px; }
.knob-value { font-size: 11px; text-anchor: middle; }
.knob-label { font-size: 9px; }

.freq { width: 106px; color: #000; }
.freq h2 { color: #000080; }
.freq .knob { margin: -1px 0 0 8px; }

.sync { width: 126px; }
.sync h2 { color: #606060; }

.sync-grid {
  display: grid;
  grid-template-columns: repeat(4, 24px);
  gap: 7px 5px;
  padding: 4px 0 0 8px;
}

.combo-sync {
  grid-column: span 2;
  width: 47px;
  height: 22px;
  border: 1px solid #a0a0a0;
  background: #f0f0f0;
  font-size: 12px;
}

.combo-sync::after { border-top-color: #909090; }

.control { width: 134px; }
.control h2 { color: #99b4d1; }

.control-grid {
  display: grid;
  grid-template-columns: 40px 40px 40px;
  gap: 2px 3px;
  padding: 1px 0 0 4px;
}

.big {
  display: flex;
  align-items: center;
  justify-content: center;
  height: 28px;
  border: 1px solid #003c74;
  border-radius: 2px;
  background: linear-gradient(#fff, #e8e8e8);
}

.pause { border-color: #b0b0b0; background: #f0f0f0; }
.multi { border-color: #f00; }
.start { grid-column: span 2; justify-content: flex-start; padding-left: 8px; font: bold 12px/14px "DejaVu Sans Condensed", sans-serif; }
.start span { flex: 1; padding-left: 4px; }

.version {
  align-self: end;
  padding-left: 6px;
  color: #008000;
  font: bold 12px/14px "DejaVu Sans Condensed", sans-serif;
}

/* status bar */
.status {
  display: grid;
  grid-template-columns: 190px 1fr 48px;
  gap: 2px;
  padding-top: 2px;
  font: 11px/15px "DejaVu Sans Condensed", "DejaVu Sans", sans-serif;
}

.status span {
  min-height: 17px;
  padding-left: 3px;
  border: 1px solid #a0a0a0;
  border-right-color: #fff;
  border-bottom-color: #fff;
}
```
